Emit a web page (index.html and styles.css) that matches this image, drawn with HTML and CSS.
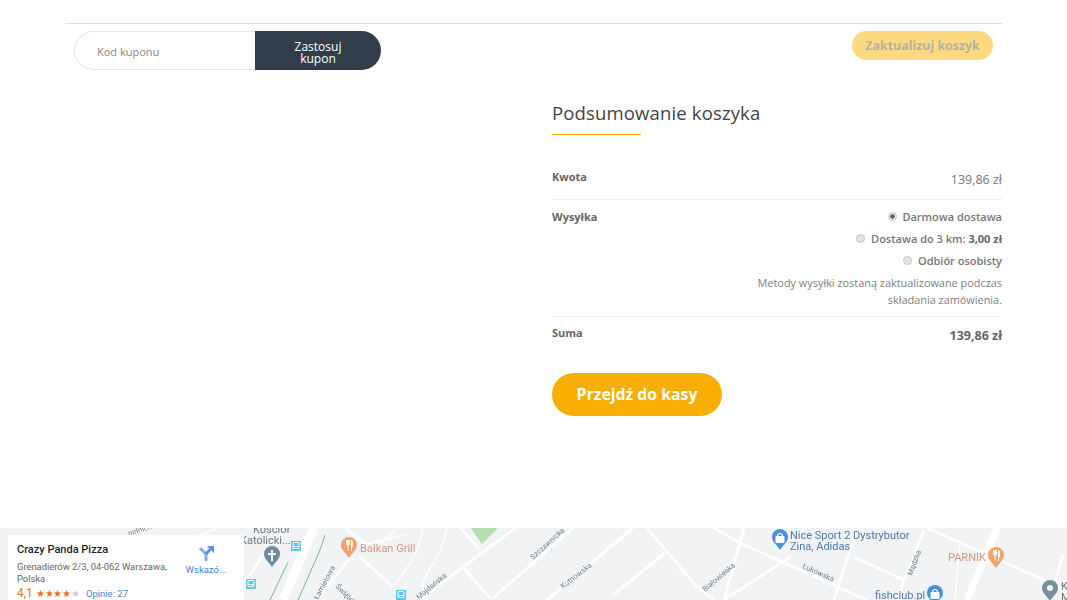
FILE: index.html
```html
<!DOCTYPE html>
<html lang="pl">
<head>
<meta charset="utf-8">
<title>Koszyk</title>
<link rel="stylesheet" href="styles.css">
</head>
<body>
<main class="page">
  <div class="container">
    <div class="actions">
      <form class="coupon">
        <input class="coupon-input" type="text" placeholder="Kod kuponu">
        <button class="coupon-btn" type="button">Zastosuj kupon</button>
      </form>
      <button class="update-btn" type="button">Zaktualizuj koszyk</button>
    </div>
    <section class="totals">
      <h2 class="totals-title">Podsumowanie koszyka</h2>
      <div class="row row-amount">
        <div class="label">Kwota</div>
        <div class="amount">139,86 zł</div>
      </div>
      <div class="row row-shipping">
        <div class="label">Wysyłka</div>
        <div class="shipping">
          <label class="opt"><input type="radio" name="s" checked> Darmowa dostawa</label>
          <label class="opt"><input type="radio" name="s"> Dostawa do 3 km: <b>3,00 zł</b></label>
          <label class="opt"><input type="radio" name="s"> Odbiór osobisty</label>
          <p class="note">Metody wysyłki zostaną zaktualizowane podczas<br>składania zamówienia.</p>
        </div>
      </div>
      <div class="row row-sum">
        <div class="label">Suma</div>
        <div class="sum">139,86 zł</div>
      </div>
      <button class="checkout" type="button">Przejdź do kasy</button>
    </section>
  </div>
  <section class="map">
    <svg class="map-svg" viewBox="0 528 1067 72" width="1067" height="72">
      <defs>
        <path id="pin" d="M0 0a8 8 0 0 1 8 8c0 5-5 8-8 13c-3-5-8-8-8-13a8 8 0 0 1 8-8z"/>
        <g id="fork">
          <path d="M-3 3v4a1.500 1.500 0 0 0 1.500 1.500v5h1v-5a1.500 1.500 0 0 0 1.500-1.500v-4zM2 3v11h1v-4h1V5c0-1-1-2-2-2z" fill="#fff"/>
        </g>
        <g id="bag">
          <rect x="-4.500" y="-2" width="9" height="7" rx="1" fill="#fff"/>
          <path d="M-2.500 -2a2.500 2.500 0 0 1 5 0" fill="none" stroke="#fff" stroke-width="1.200"/>
        </g>
        <g id="bus">
          <rect x="-5" y="-5" width="10" height="10" rx="1" fill="#5ac8ea"/>
          <rect x="-3" y="-3.500" width="6" height="6" rx="1" fill="none" stroke="#e8f8fd" stroke-width="1.200"/>
          <path d="M-3 0.500h6" stroke="#e8f8fd" stroke-width="1"/>
        </g>
      </defs>
      <polygon points="470,527 499,527 482,544" fill="#b5dfb0"/>
      <g class="roads">
        <path d="M517 527L463 567L420 600M463 567L490 598M573 528L493 598M633 528L547 600M647 528L697 587L715 600M665 553L613 595M460 527L480 550M360 557L393 587M714 528L740 543L800 570L867 600M744 528L724 600M924 530L904 580L897 600M857 528L834 600M854 557L904 580M927 528L1044 580L1067 592M1063 555L1050 600M790 557L724 600M345 528L367 545M350 558L317 600M263 555L245 582"/>
        <path class="thick" d="M314 528L283 600"/>
        <path class="thick thick-sm" d="M997 528L967 600"/>
        <path class="thin" d="M423 527C420 550 410 565 393 587M447 528C440 560 430 565 424 580C420 590 425 595 428 600M362 545L405 535M375 548L395 530M960 540L955 600M130 535L156 527M200 535L220 527"/>
      </g>
      <path class="green-line" d="M325 535L320 550L298 600M288 562L270 600"/>
      <g class="labels">
        <text x="253" y="533" class="t-gray">Kościół</text>
        <text x="240" y="544" class="t-gray">Katolicki...</text>
        <text x="360" y="552" class="t-orange">Bałkan Grill</text>
        <text x="790" y="539" class="t-blue">Nice Sport 2 Dystrybutor</text>
        <text x="790" y="550" class="t-blue">Zina, Adidas</text>
        <text x="948" y="561" class="t-orange">PARNIK</text>
        <text x="875" y="599" class="t-blue">fishclub.pl</text>
        <text x="1061" y="590" class="t-gray">K</text>
        <text x="1061" y="601" class="t-gray">M</text>
        <text class="t-road" transform="translate(533,560) rotate(-42)">Szczawnicka</text>
        <text class="t-road" transform="translate(563,589) rotate(-38)">Kutnowska</text>
        <text class="t-road" transform="translate(419,600) rotate(-40)">Majdańska</text>
        <text class="t-road" transform="translate(802,568) rotate(24)">Łukowska</text>
        <text class="t-road" transform="translate(705,592) rotate(-40)">Białowieska</text>
        <text class="t-road" transform="translate(912,576) rotate(-70)">Mądzka</text>
        <text class="t-road" transform="translate(318,600) rotate(-62)">Łamietowa</text>
        <text class="t-road" transform="translate(335,587) rotate(45)">Świętej</text>
        <text class="t-road" transform="translate(129,536) rotate(-18)">polnick...</text>
      </g>
      <g>
        <use href="#pin" x="272" y="546" fill="#6f8ca3"/>
        <path d="M271 550h2v3h3v2h-3v6h-2v-6h-3v-2h3z" fill="#fff"/>
        <use href="#pin" x="349" y="537" fill="#f4a26b"/>
        <use href="#fork" x="349" y="537"/>
        <use href="#pin" x="780" y="529" fill="#4a90e2"/>
        <use href="#bag" x="780" y="538"/>
        <use href="#pin" x="996" y="547" fill="#f4a26b"/>
        <use href="#fork" x="996" y="547"/>
        <use href="#pin" x="1050" y="580" fill="#78909c"/>
        <circle cx="1050" cy="588" r="3" fill="#f1f3f4"/>
        <circle cx="935" cy="593" r="8" fill="#4a90e2"/>
        <use href="#bag" x="935" y="594"/>
      </g>
      <use href="#bus" x="296" y="546"/>
      <use href="#bus" x="251" y="584"/>
      <use href="#bus" x="401" y="595"/>
    </svg>
    <aside class="map-card">
      <div class="card-main">
        <div class="card-name">Crazy Panda Pizza</div>
        <div class="card-addr">Grenadierów 2/3, 04-062 Warszawa, Polska</div>
        <div class="card-rating"><span class="score">4,1</span><span class="stars">★★★★<i>★</i></span><span class="reviews">Opinie: 27</span></div>
      </div>
      <div class="card-dir">
        <svg viewBox="0 0 16 16" width="16" height="16">
          <path d="M2 3L8 9V16" fill="none" stroke="#7fb0e6" stroke-width="3"/>
          <path d="M8 9L12.500 4" fill="none" stroke="#5b93d8" stroke-width="3"/>
          <path d="M9 1H16V8z" fill="#5b93d8"/>
        </svg>
        <span>Wskazó...</span>
      </div>
    </aside>
  </section>
</main>
</body>
</html>
```

FILE: styles.css
```css
* { box-sizing: border-box; }
html, body { margin: 0; padding: 0; height: 600px; overflow: hidden; background: #fff; }
body { font-family: "Open Sans", sans-serif; font-size: 12px; color: #777; }
.page { display: flex; flex-direction: column; height: 600px; }
.container { width: 937px; height: 528px; margin-left: 65px; padding-top: 23px; }
.actions { display: flex; justify-content: space-between; align-items: flex-start; border-top: 1px solid #ddd; padding: 7px 9px 0; }
.coupon { display: flex; width: 307px; height: 39px; }
.coupon-input { width: 181px; height: 39px; border: 1px solid #e6e6e6; border-right: 0; border-radius: 20px 0 0 20px; padding: 2px 0 0 22px; font: 11px "Open Sans", sans-serif; color: #777; outline: 0; }
.coupon-input::placeholder { color: #8a8a8a; opacity: 1; }
.coupon-btn { width: 126px; height: 39px; border: 0; background: #323d4a; color: #fff; border-radius: 0 20px 20px 0; font: 12px/12px "Open Sans", sans-serif; padding: 4px 30px 0; }
.update-btn { width: 141px; height: 29px; border: 0; border-radius: 15px; background: #fdd97f; color: #b9b29b; font: 700 12.400px "Open Sans", sans-serif; padding: 0; }
.totals { width: 450px; margin: 30px 0 0 487px; }
.totals-title { margin: 0; font-weight: 400; font-size: 18.500px; line-height: 26px; color: #444; position: relative; height: 35px; letter-spacing: .15px; }
.totals-title::after { content: ""; display: block; width: 89px; height: 1px; background: #f7b10a; position: absolute; left: 0; bottom: 0; }
.row { display: flex; justify-content: space-between; }
.label { font-weight: 700; font-size: 11px; color: #666; }
.row-amount { height: 65px; padding-top: 34px; border-bottom: 1px solid #eee; }
.row-amount .label { line-height: 15px; }
.amount { font-size: 12.500px; line-height: 18px; margin-top: 2px; color: #777; }
.row-shipping { height: 117px; padding-top: 9px; border-bottom: 1px solid #f2f2f2; }
.row-shipping .label { line-height: 16px; }
.shipping { text-align: right; }
.opt { display: block; font-size: 11px; line-height: 16px; margin-bottom: 6px; color: #777; font-weight: 600; }
.opt input { appearance: none; width: 9px; height: 9px; margin: 0 3px 3px 0; vertical-align: middle; border-radius: 50%; border: 1px solid #c4c4c4; background: #e4e4e4; }
.opt input:checked { background: radial-gradient(circle, #666 0 2px, #eee 2.500px); }
.opt b { font-weight: 700; color: #666; }
.note { margin: 0; font-size: 10.900px; line-height: 16.500px; color: #808080; }
.row-sum { height: 56px; padding-top: 8px; }
.row-sum .label { line-height: 16px; }
.sum { font-size: 12.500px; font-weight: 700; color: #666; line-height: 18px; margin-top: 2px; }
.checkout { display: block; width: 170px; height: 43px; border: 0; border-radius: 22px; background: #f9ae04; color: #fff; font: 700 15.800px/40px "Open Sans", sans-serif; padding: 0 0 2px; }
.map { position: relative; height: 72px; background: #f1f3f4; overflow: hidden; }
.map-svg { display: block; filter: blur(.4px); }
.roads path { fill: none; stroke: #fff; stroke-width: 3; }
.roads .thick { stroke-width: 9; }
.roads .thick-sm { stroke-width: 7; }
.roads .thin { stroke-width: 1.500; }
.green-line { fill: none; stroke: #7cb98a; stroke-width: 1; }
.labels text { font-family: Roboto, sans-serif; font-size: 11px; }
.labels .t-gray { fill: #6a7b85; }
.labels .t-orange { fill: #cf9a7c; }
.labels .t-blue { fill: #4d7ab0; }
.labels .t-road { fill: #77808a; font-size: 7.500px; }
.map-card { position: absolute; left: 8px; top: 7px; width: 236px; height: 70px; background: #fff; display: flex; padding: 7px 9px; font-family: Roboto, sans-serif; }
.card-main { width: 154px; }
.card-name { font-size: 11px; font-weight: 500; color: #222; line-height: 15px; }
.card-addr { font-size: 9.400px; line-height: 12px; color: #666; margin-top: 4px; }
.card-rating { font-size: 9.500px; line-height: 13px; display: flex; align-items: center; margin-top: 2px; }
.score { color: #e7711b; font-size: 12px; margin-right: 3px; }
.stars { color: #e7711b; font-size: 10px; letter-spacing: -.2px; margin-right: 6px; }
.stars i { color: #ccc; font-style: normal; }
.reviews { color: #4a86c8; }
.card-dir { width: 50px; margin-left: 10px; padding-top: 3px; display: flex; flex-direction: column; align-items: center; font-size: 9.500px; color: #4a86c8; }
.card-dir span { margin-top: 3px; white-space: nowrap; }
```
